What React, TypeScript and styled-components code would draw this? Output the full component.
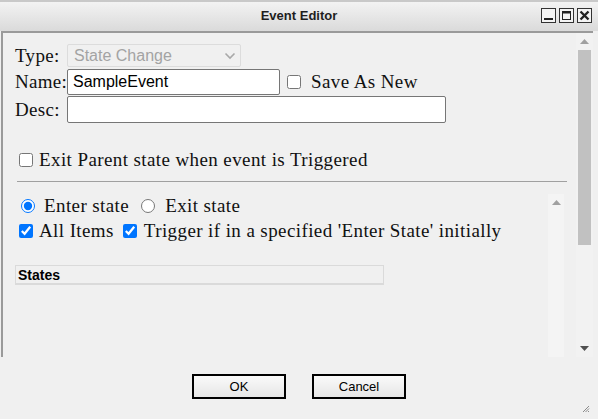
import React from "react";
import styled, { createGlobalStyle } from "styled-components";

const Global = createGlobalStyle`
  html, body { margin: 0; padding: 0; background: #f0f0f0; }
  body { width: 598px; height: 419px; overflow: hidden; }
`;

const Window = styled.div`
  position: relative;
  width: 598px;
  height: 419px;
  background: #f0f0f0;
  display: flex;
  flex-direction: column;
  box-sizing: border-box;
  font-family: "Liberation Serif", "Times New Roman", serif;
`;

const TitleBar = styled.div`
  height: 31px;
  box-sizing: border-box;
  border-top: 2px solid #c9c9c9;
  background: linear-gradient(#f3f3f3, #dadada);
  display: flex;
  align-items: center;
  justify-content: center;
  position: relative;
`;

const Title = styled.span`
  font-family: "Liberation Sans", Arial, sans-serif;
  font-weight: bold;
  font-size: 13px;
  color: #1e1e1e;
  margin-top: -3px;
`;

const WinButtons = styled.div`
  position: absolute;
  right: 6px;
  top: 6px;
  display: flex;
  gap: 3px;
`;

const WinBtn = styled.div`
  width: 15px;
  height: 15px;
  box-sizing: border-box;
  border: 1px solid #333;
  background: #f4f4f4;
  display: flex;
  align-items: center;
  justify-content: center;
`;

const Frame = styled.div`
  height: 326px;
  margin-right: 5px;
  margin-left: 1px;
  border-top: 2px solid #9a9a9a;
  border-left: 2px solid #9a9a9a;
  display: flex;
  box-sizing: border-box;
`;

const Content = styled.div`
  flex: 1;
  padding: 11px 0 0 12px;
  display: flex;
  flex-direction: column;
  min-width: 0;
`;

const Row = styled.div<{ $mt?: number }>`
  display: flex;
  align-items: center;
  margin-top: ${(p) => p.$mt ?? 0}px;
`;

const Label = styled.label`
  width: 52px;
  font-size: 19px;
  letter-spacing: 0.3px;
  color: #111;
  line-height: 20px;
`;

const FakeSelect = styled.div`
  width: 174px;
  height: 23px;
  box-sizing: border-box;
  border: 1px solid #dcdcdc;
  border-radius: 2px;
  display: flex;
  align-items: center;
  justify-content: space-between;
  padding: 0 4px 0 6px;
  font-family: "Liberation Sans", Arial, sans-serif;
  font-size: 16px;
  color: #a3a3a3;
`;

const TextInput = styled.input<{ $w: number; $h: number }>`
  width: ${(p) => p.$w}px;
  height: ${(p) => p.$h}px;
  box-sizing: border-box;
  border: 1px solid #767676;
  border-radius: 2px;
  background: #fff;
  padding: 0 5px;
  font-family: "Liberation Sans", Arial, sans-serif;
  font-size: 16px;
  color: #000;
  outline: none;
`;

const Box = styled.input`
  width: 14px;
  height: 14px;
  margin: 0;
  accent-color: #0075ff;
`;

const Text = styled.span<{ $ml?: number }>`
  font-size: 19px;
  letter-spacing: 0.4px;
  color: #111;
  margin-left: ${(p) => p.$ml ?? 6}px;
  white-space: nowrap;
`;

const Divider = styled.div`
  height: 1px;
  background: #a0a0a0;
  margin: 10px 9px 0 2px;
`;

const Lower = styled.div`
  flex: 1;
  display: flex;
  margin-right: 12px;
`;

const LowerBody = styled.div`
  flex: 1;
  display: flex;
  flex-direction: column;
  padding-top: 13px;
`;

const StatesHeader = styled.div`
  margin-top: 23px;
  width: 369px;
  height: 20px;
  box-sizing: border-box;
  border: 1px solid #dadada;
  border-bottom-width: 2px;
  display: flex;
  align-items: center;
  padding-left: 2px;
  font-family: "Liberation Sans", Arial, sans-serif;
  font-weight: bold;
  font-size: 14px;
  color: #000;
`;

const InnerBar = styled.div`
  width: 16px;
  margin-top: 12px;
  background: #f4f4f4;
  display: flex;
  justify-content: center;
  padding-top: 6px;
`;

const OuterBar = styled.div`
  width: 17px;
  background: #f2f2f2;
  display: flex;
  flex-direction: column;
  align-items: center;
  padding: 6px 0 6px;
  box-sizing: border-box;
`;

const Thumb = styled.div`
  width: 13px;
  height: 195px;
  background: #c1c1c1;
  margin-top: 6px;
`;

const Spacer = styled.div`
  flex: 1;
`;

const Footer = styled.div`
  flex: 1;
  display: flex;
  justify-content: center;
  gap: 26px;
  padding-top: 17px;
`;

const DlgButton = styled.button`
  width: 94px;
  height: 25px;
  box-sizing: border-box;
  border: 2px solid #000;
  border-radius: 0;
  background: linear-gradient(#fafafa, #e6e6e6);
  font-family: "Liberation Sans", Arial, sans-serif;
  font-size: 13px;
  color: #000;
  padding: 0;
`;

const Grip = styled.svg`
  position: absolute;
  right: 8px;
  bottom: 6px;
`;

const Arrow = ({ up }: { up: boolean }) => (
  <svg width="9" height="5" viewBox="0 0 9 5">
    {up ? <polygon points="0,5 9,5 4.5,0" fill="#a0a0a0" /> : <polygon points="0,0 9,0 4.5,5" fill="#505050" />}
  </svg>
);

export default function App() {
  return (
    <>
      <Global />
      <Window>
        <TitleBar>
          <Title>Event Editor</Title>
          <WinButtons>
            <WinBtn>
              <svg width="13" height="13" viewBox="0 0 13 13">
                <rect x="2" y="9" width="9" height="2" fill="#222" />
              </svg>
            </WinBtn>
            <WinBtn>
              <svg width="13" height="13" viewBox="0 0 13 13">
                <rect x="2.5" y="2.5" width="8" height="8" fill="none" stroke="#222" />
                <rect x="2" y="2" width="9" height="2.5" fill="#222" />
              </svg>
            </WinBtn>
            <WinBtn>
              <svg width="13" height="13" viewBox="0 0 13 13">
                <path d="M2.5 2.5 L10.5 10.5 M10.5 2.5 L2.5 10.5" stroke="#222" strokeWidth="2.4" />
              </svg>
            </WinBtn>
          </WinButtons>
        </TitleBar>
        <Frame>
          <Content>
            <Row>
              <Label>Type:</Label>
              <FakeSelect>
                State Change
                <svg width="12" height="8" viewBox="0 0 12 8">
                  <path d="M1.5 1.5 L6 6 L10.5 1.5" fill="none" stroke="#a8a8a8" strokeWidth="1.6" />
                </svg>
              </FakeSelect>
            </Row>
            <Row $mt={2}>
              <Label>Name:</Label>
              <TextInput $w={213} $h={26} defaultValue="SampleEvent" />
              <Box type="checkbox" style={{ marginLeft: 7 }} />
              <Text $ml={10}>Save As New</Text>
            </Row>
            <Row $mt={1}>
              <Label>Desc:</Label>
              <TextInput $w={379} $h={27} defaultValue="" />
            </Row>
            <Row $mt={26}>
              <Box type="checkbox" style={{ marginLeft: 4 }} />
              <Text $ml={6}>Exit Parent state when event is Triggered</Text>
            </Row>
            <Divider />
            <Lower>
              <LowerBody>
                <Row>
                  <Box type="radio" name="es" defaultChecked style={{ marginLeft: 6 }} />
                  <Text $ml={9}>Enter state</Text>
                  <Box type="radio" name="es" style={{ marginLeft: 12 }} />
                  <Text $ml={10}>Exit state</Text>
                </Row>
                <Row $mt={3}>
                  <Box type="checkbox" defaultChecked style={{ marginLeft: 4 }} />
                  <Text $ml={6}>All Items</Text>
                  <Box type="checkbox" defaultChecked style={{ marginLeft: 9 }} />
                  <Text $ml={7}>Trigger if in a specified 'Enter State' initially</Text>
                </Row>
                <StatesHeader>States</StatesHeader>
              </LowerBody>
              <InnerBar>
                <Arrow up />
              </InnerBar>
            </Lower>
          </Content>
          <OuterBar>
            <Arrow up />
            <Thumb />
            <Spacer />
            <Arrow up={false} />
          </OuterBar>
        </Frame>
        <Footer>
          <DlgButton>OK</DlgButton>
          <DlgButton>Cancel</DlgButton>
        </Footer>
        <Grip width="8" height="8" viewBox="0 0 8 8">
          <path d="M7 1 L1 7 M7 3.5 L3.5 7 M7 6 L6 7" stroke="#8a8a8a" strokeWidth="1" />
        </Grip>
      </Window>
    </>
  );
}
